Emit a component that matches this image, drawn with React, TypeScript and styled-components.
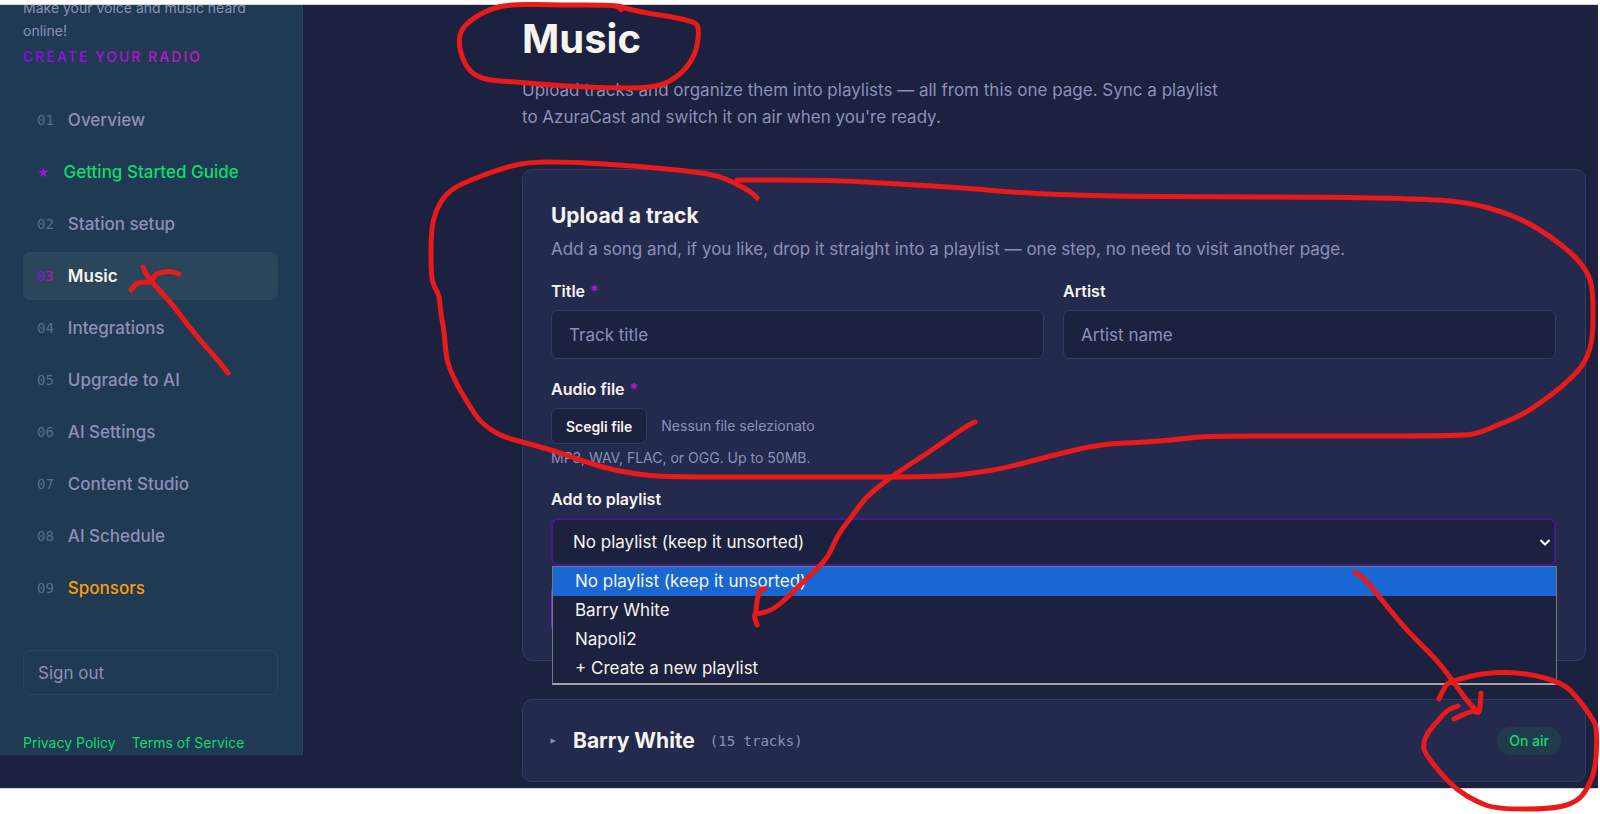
import React from "react";
import styled, { createGlobalStyle, css } from "styled-components";

const c = {
  bg: "#1b213f",
  side: "#1f3a52",
  sideActive: "#2b455b",
  card: "#242a4e",
  line: "#2b405f",
  muted: "#8e8fb9",
  text: "#f6f4ee",
  green: "#0ade6c",
  orange: "#ff9a0a",
  violet: "#7a14e6",
  magenta: "#cc14bd",
  marker: "#e81a1a",
};

const Global = createGlobalStyle`
  *, *::before, *::after { box-sizing: border-box; }
  body {
    margin: 0;
    background: #fff;
    color: ${c.text};
    font-family: Inter, "Liberation Sans", sans-serif;
    font-size: 17px;
  }
  button, input, select { font: inherit; }
  h1, h2, p, ul { margin: 0; padding: 0; }
`;

const mono = css`
  font-family: "DejaVu Sans Mono", "Liberation Mono", monospace;
`;

const gradientText = css`
  background: linear-gradient(90deg, ${c.violet}, ${c.magenta});
  background-clip: text;
  -webkit-background-clip: text;
  color: transparent;
`;

const Page = styled.div`
  position: relative;
  padding: 4px 2px 26px 0;
`;

const Frame = styled.div`
  display: flex;
  align-items: flex-start;
  overflow: hidden;
  background: ${c.bg};
  border: solid #d4d5dc;
  border-width: 1px 0;
`;

const Sidebar = styled.aside`
  flex: 0 0 303px;
  padding: 0 24px 0 23px;
  background: ${c.side};
  border-right: 1px solid ${c.line};
`;

const Brand = styled.div`
  margin-top: -9px;
`;

const Tagline = styled.p`
  font-size: 14px;
  line-height: 23px;
  color: ${c.muted};
`;

const Slogan = styled.p`
  display: inline-block;
  margin-top: 4px;
  font-size: 14px;
  line-height: 22px;
  font-weight: 600;
  letter-spacing: 2px;
  ${gradientText}
`;

const Nav = styled.nav`
  display: flex;
  flex-direction: column;
  gap: 4px;
  margin-top: 28px;
`;

const NavLink = styled.a<{ $active?: boolean; $tone?: string }>`
  display: flex;
  align-items: center;
  gap: 14px;
  height: 48px;
  padding: 0 14px;
  border-radius: 7px;
  font-weight: ${(p) => (p.$active ? 600 : 500)};
  text-decoration: none;
  color: ${(p) => p.$tone ?? (p.$active ? c.text : c.muted)};
  background: ${(p) => (p.$active ? c.sideActive : "transparent")};
`;

const NavIndex = styled.span<{ $lit?: boolean }>`
  ${mono}
  font-size: 14px;
  font-weight: 400;
  color: #5b6b8b;
  ${(p) => p.$lit && gradientText}
`;

const NavStar = styled.span`
  font-family: "DejaVu Sans", sans-serif;
  font-size: 14px;
  font-weight: 400;
  ${gradientText}
`;

const SignOut = styled.button`
  display: block;
  width: 100%;
  height: 45px;
  margin-top: 38px;
  padding: 0 14px;
  text-align: left;
  color: ${c.muted};
  background: transparent;
  border: 1px solid ${c.sideActive};
  border-radius: 7px;
`;

const Legal = styled.div`
  display: flex;
  gap: 16px;
  padding-top: 36px;
  font-size: 14px;
  line-height: 24px;
`;

const LegalLink = styled.a`
  color: ${c.green};
  text-decoration: none;
`;

const Main = styled.main`
  flex: 1;
  min-width: 0;
  padding: 9px 12px 6px 219px;
`;

const Title = styled.h1`
  font-size: 40px;
  line-height: 50px;
  font-weight: 700;
`;

const Lead = styled.p`
  max-width: 704px;
  margin-top: 13px;
  line-height: 27px;
  color: ${c.muted};
`;

const Card = styled.section`
  background: ${c.card};
  border: 1px solid ${c.line};
  border-radius: 10px;
`;

const UploadCard = styled(Card)`
  margin-top: 38px;
  padding: 30px 29px 28px 28px;
`;

const CardTitle = styled.h2`
  font-size: 21px;
  line-height: 32px;
  font-weight: 700;
`;

const CardText = styled.p`
  margin-top: 4px;
  line-height: 27px;
  color: ${c.muted};
`;

const Columns = styled.div`
  display: grid;
  grid-template-columns: 1fr 1fr;
  gap: 19px;
  margin-top: 16px;
`;

const Field = styled.div<{ $spaced?: boolean }>`
  display: flex;
  flex-direction: column;
  margin-top: ${(p) => (p.$spaced ? 18 : 0)}px;
`;

const Label = styled.label`
  margin-bottom: 7px;
  font-size: 16px;
  line-height: 24px;
  font-weight: 600;
`;

const Required = styled.span`
  margin-left: 5px;
  color: #b01acb;
`;

const TextInput = styled.input`
  width: 100%;
  height: 49px;
  padding: 0 17px;
  color: ${c.text};
  background: ${c.bg};
  border: 1px solid ${c.line};
  border-radius: 7px;
  &::placeholder { color: ${c.muted}; opacity: 1; }
`;

const FileRow = styled.div`
  display: flex;
  align-items: center;
  gap: 14px;
`;

const FileButton = styled.button`
  height: 36px;
  padding: 0 14px;
  font-size: 14px;
  font-weight: 600;
  color: ${c.text};
  background: ${c.bg};
  border: 1px solid ${c.line};
  border-radius: 7px;
`;

const Small = styled.span`
  font-size: 14px;
  line-height: 22px;
  color: ${c.muted};
`;

const Hint = styled(Small)`
  margin-top: 3px;
`;

const SelectWrap = styled.div`
  position: relative;
`;

const Select = styled.select`
  display: block;
  width: 100%;
  height: 48px;
  padding: 0 20px;
  appearance: none;
  color: ${c.text};
  background: ${c.bg};
  border: 2px solid #421b8c;
  border-radius: 7px;
  outline: none;
`;

const Chevron = styled.svg`
  position: absolute;
  top: 20px;
  right: 5px;
  pointer-events: none;
`;

const Options = styled.ul`
  position: absolute;
  z-index: 2;
  top: 48px;
  left: 1px;
  right: -1px;
  list-style: none;
  background: ${c.bg};
  border: 1px solid #777780;
  border-bottom: 2px solid #a3a3a3;
`;

const Option = styled.li<{ $selected?: boolean }>`
  padding: 0 22px;
  line-height: 29px;
  background: ${(p) => (p.$selected ? "#1967d2" : "transparent")};
`;

const Submit = styled.button`
  display: block;
  width: 160px;
  height: 48px;
  margin-top: 18px;
  border: 0;
  border-radius: 7px;
  background: linear-gradient(90deg, #7b2bd6, ${c.magenta});
`;

const PlaylistCard = styled(Card)`
  display: flex;
  align-items: center;
  height: 83px;
  margin-top: 38px;
  padding: 0 24px 0 27px;
`;

const Disclosure = styled.button`
  display: flex;
  align-items: center;
  padding: 0;
  color: ${c.text};
  background: none;
  border: 0;
`;

const PlaylistName = styled.span`
  margin-left: 17px;
  font-size: 21px;
  font-weight: 700;
`;

const Count = styled.span`
  ${mono}
  margin-left: 15px;
  font-size: 14px;
  color: ${c.muted};
`;

const OnAir = styled.span`
  margin-left: auto;
  padding: 0 12px;
  border-radius: 14px;
  font-size: 14px;
  line-height: 28px;
  font-weight: 500;
  color: ${c.green};
  background: #203b4e;
`;

const Ink = styled.svg`
  position: absolute;
  z-index: 3;
  top: 0;
  left: 0;
  width: 100%;
  pointer-events: none;
`;

const navItems = [
  { index: "01", label: "Overview" },
  { label: "Getting Started Guide", tone: c.green },
  { index: "02", label: "Station setup" },
  { index: "03", label: "Music", active: true },
  { index: "04", label: "Integrations" },
  { index: "05", label: "Upgrade to AI" },
  { index: "06", label: "AI Settings" },
  { index: "07", label: "Content Studio" },
  { index: "08", label: "AI Schedule" },
  { index: "09", label: "Sponsors", tone: c.orange },
];

const options = ["No playlist (keep it unsorted)", "Barry White", "Napoli2", "+ Create a new playlist"];

type Point = [number, number];

/* Freehand marker strokes, each a list of points along the pen's path. */
const strokes: Point[][] = [
  [[621,10],[620,7],[612,5],[560,5],[515,4],[492,8],[470,20],[460,32],[459,44],[462,58],[470,72],[485,80],[515,82],[563,86],[607,88],[650,88],[670,82],[687,68],[697,50],[699,28],[695,22],[673,17],[640,12],[618,6]],
  [[757,198],[753,193],[735,183],[716,175],[680,170],[620,165],[570,162],[527,162],[500,169],[460,184],[445,195],[436,210],[431,230],[431,275],[434,287],[439,294],[441,315],[444,330],[446,355],[449,367],[457,385],[469,405],[480,422],[500,436],[522,442],[552,450],[580,460],[605,468],[635,474],[665,477],[800,477],[940,477],[975,473],[1005,468],[1050,456],[1100,444],[1150,442],[1190,438],[1210,436],[1300,436],[1464,436],[1482,432],[1500,424],[1522,415],[1540,403],[1563,386],[1583,366],[1591,347],[1593,330],[1593,290],[1588,273],[1575,256],[1550,236],[1525,221],[1500,211],[1470,203],[1430,199],[1320,197],[1220,197],[1100,196],[1020,193],[965,188],[900,184],[830,180],[737,180]],
  [[228,373],[218,360],[206,347],[190,328],[172,304],[160,291],[152,282],[146,274],[143,267]],
  [[131,290],[135,284],[142,282],[152,282],[154,276],[158,273],[170,271],[179,274]],
  [[975,422],[968,425],[945,441],[920,458],[898,472],[882,484],[865,498],[853,515],[839,533],[832,548],[826,560],[800,585],[790,595],[773,610],[757,614]],
  [[765,589],[761,588],[757,598],[756,613],[754,616],[757,625]],
  [[1355,573],[1361,574],[1385,604],[1409,633],[1435,658],[1450,677],[1470,705],[1479,712]],
  [[1481,693],[1480,710],[1478,713],[1473,710],[1454,719]],
  [[1439,699],[1445,685],[1452,681],[1487,672],[1527,673],[1563,683],[1578,698],[1592,718],[1597,727],[1596,767],[1588,788],[1577,802],[1553,809],[1497,809],[1477,802],[1457,790],[1440,773],[1425,753],[1423,745],[1427,733],[1437,722],[1447,710],[1458,706]],
];

/* Rounds a stroke by curving from midpoint to midpoint of its segments. */
function smooth(points: Point[]) {
  const [first, ...rest] = points;
  const last = rest[rest.length - 1];
  const curves = rest.slice(0, -1).map(([x, y], i) => {
    const [nx, ny] = rest[i + 1];
    return `Q${x} ${y} ${(x + nx) / 2} ${(y + ny) / 2}`;
  });
  return `M${first.join(" ")}${curves.join("")}L${last.join(" ")}`;
}

export default function App() {
  return (
    <Page>
      <Global />
      <Frame>
        <Sidebar>
          <Brand>
            <Tagline>Make your voice and music heard online!</Tagline>
            <Slogan>CREATE YOUR RADIO</Slogan>
          </Brand>
          <Nav>
            {navItems.map((item) => (
              <NavLink key={item.label} href="#" $active={item.active} $tone={item.tone}>
                {item.index ? <NavIndex $lit={item.active}>{item.index}</NavIndex> : <NavStar>★</NavStar>}
                {item.label}
              </NavLink>
            ))}
          </Nav>
          <SignOut type="button">Sign out</SignOut>
          <Legal>
            <LegalLink href="#">Privacy Policy</LegalLink>
            <LegalLink href="#">Terms of Service</LegalLink>
          </Legal>
        </Sidebar>
        <Main>
          <Title>Music</Title>
          <Lead>
            Upload tracks and organize them into playlists — all from this one page. Sync a playlist to
            AzuraCast and switch it on air when you're ready.
          </Lead>
          <UploadCard>
            <CardTitle>Upload a track</CardTitle>
            <CardText>
              Add a song and, if you like, drop it straight into a playlist — one step, no need to visit
              another page.
            </CardText>
            <Columns>
              <Field>
                <Label htmlFor="title">
                  Title<Required>*</Required>
                </Label>
                <TextInput id="title" placeholder="Track title" />
              </Field>
              <Field>
                <Label htmlFor="artist">Artist</Label>
                <TextInput id="artist" placeholder="Artist name" />
              </Field>
            </Columns>
            <Field $spaced>
              <Label htmlFor="audio">
                Audio file<Required>*</Required>
              </Label>
              <FileRow>
                <FileButton id="audio" type="button">Scegli file</FileButton>
                <Small>Nessun file selezionato</Small>
              </FileRow>
              <Hint>MP3, WAV, FLAC, or OGG. Up to 50MB.</Hint>
            </Field>
            <Field $spaced>
              <Label htmlFor="playlist">Add to playlist</Label>
              <SelectWrap>
                <Select id="playlist" defaultValue={options[0]}>
                  {options.map((o) => (
                    <option key={o}>{o}</option>
                  ))}
                </Select>
                <Chevron width="12" height="10" viewBox="0 0 12 10" fill="none" stroke="#fff" strokeWidth="2">
                  <path d="M1.5 2l4.500 4.500L10.500 2" />
                </Chevron>
                <Options role="listbox" aria-label="Playlists">
                  {options.map((o, i) => (
                    <Option key={o} role="option" aria-selected={i === 0} $selected={i === 0}>
                      {o}
                    </Option>
                  ))}
                </Options>
              </SelectWrap>
            </Field>
            <Submit type="submit" aria-label="Upload" />
          </UploadCard>
          <PlaylistCard>
            <Disclosure type="button">
              <svg width="6" height="6" viewBox="0 0 6 6" fill={c.muted}>
                <path d="M0.500 0.500L6 3L0.500 5.500Z" />
              </svg>
              <PlaylistName>Barry White</PlaylistName>
              <Count>(15 tracks)</Count>
            </Disclosure>
            <OnAir>On air</OnAir>
          </PlaylistCard>
        </Main>
      </Frame>
      <Ink viewBox="0 0 1600 814" fill="none" stroke={c.marker} strokeWidth="5" strokeLinecap="round" strokeLinejoin="round" aria-hidden="true">
        {strokes.map((points, i) => (
          <path key={i} d={smooth(points)} />
        ))}
      </Ink>
    </Page>
  );
}
